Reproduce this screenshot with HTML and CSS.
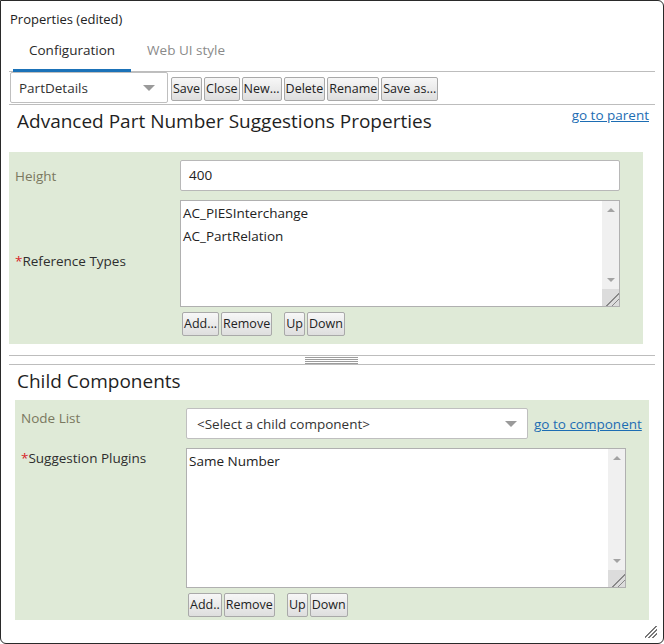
FILE: index.html
```html
<!DOCTYPE html>
<html>
<head>
<meta charset="utf-8">
<link rel="stylesheet" href="styles.css">
</head>
<body>
<div class="window">
  <div class="wtitle">Properties (edited)</div>
  <div class="tabs">
    <div class="tab active">Configuration</div>
    <div class="tab">Web UI style</div>
  </div>
  <div class="toolbar">
    <div class="select sel-part"><span>PartDetails</span><span class="arrow"></span></div>
    <button class="btn">Save</button>
    <button class="btn">Close</button>
    <button class="btn">New...</button>
    <button class="btn">Delete</button>
    <button class="btn">Rename</button>
    <button class="btn">Save as...</button>
  </div>

  <div class="sec-head">
    <h2 class="h2">Advanced Part Number Suggestions Properties</h2>
    <a class="link parent-link" href="#">go to parent</a>
  </div>
  <div class="panel panel1">
    <div class="lbl lbl-plain lbl-height">Height</div>
    <div class="field"><div class="input">400</div></div>
    <div class="lbl lbl-req lbl-ref"><span class="star">*</span>Reference Types</div>
    <div class="field">
      <div class="listbox lb1">
        <div class="items">
          <div class="item">AC_PIESInterchange</div>
          <div class="item">AC_PartRelation</div>
        </div>
        <div class="sbar"><span class="up"></span><span class="sb-fill"></span><span class="down"></span><span class="corner"></span></div>
      </div>
      <div class="btnrow">
        <button class="btn">Add...</button>
        <button class="btn">Remove</button>
        <button class="btn sp">Up</button>
        <button class="btn">Down</button>
      </div>
    </div>
  </div>

  <div class="splitter"><div class="grip"></div></div>

  <div class="sec-head sec-head2">
    <h2 class="h2">Child Components</h2>
  </div>
  <div class="panel panel2">
    <div class="lbl lbl-plain lbl-node">Node List</div>
    <div class="field row">
      <div class="select sel-child"><span>&lt;Select a child component&gt;</span><span class="arrow"></span></div>
      <a class="link comp-link" href="#">go to component</a>
    </div>
    <div class="lbl lbl-req lbl-plug"><span class="star">*</span>Suggestion Plugins</div>
    <div class="field">
      <div class="listbox lb2">
        <div class="items">
          <div class="item">Same Number</div>
        </div>
        <div class="sbar"><span class="up"></span><span class="sb-fill"></span><span class="down"></span><span class="corner"></span></div>
      </div>
      <div class="btnrow">
        <button class="btn">Add..</button>
        <button class="btn">Remove</button>
        <button class="btn sp">Up</button>
        <button class="btn">Down</button>
      </div>
    </div>
  </div>
  <div class="resize"></div>
</div>
</body>
</html>
```

FILE: styles.css
```css
* { box-sizing: border-box; }
html, body { margin: 0; padding: 0; background: #fff; }
body { font-family: "Open Sans", "Noto Sans", sans-serif; color: #222; }

.window {
  position: relative;
  width: 664px;
  height: 644px;
  border: 1px solid #2a2a2a;
  border-radius: 0 6px 6px 6px;
  padding: 0 8px 0 8px;
  overflow: hidden;
}

.wtitle {
  font-size: 13px;
  line-height: 20px;
  height: 29px;
  padding-top: 8px;
  padding-left: 1px;
  color: #222;
}

.tabs {
  display: flex;
  height: 42px;
  border-bottom: 1px solid #bdbdbd;
  padding-left: 4px;
}
.tab {
  height: 42px;
  margin-bottom: -1px;
  padding: 0 16px 0 16px;
  display: flex;
  align-items: center;
  font-size: 13.5px;
  color: #8a8a8a;
  border-bottom: 3px solid transparent;
}
.tab.active {
  color: #2a2a2a;
  border-bottom-color: #1b72b8;
}

.toolbar {
  display: flex;
  align-items: center;
  gap: 2px;
  height: 33px;
  border-bottom: 1px solid #bdbdbd;
  padding-left: 1px;
}

.select {
  display: flex;
  align-items: center;
  justify-content: space-between;
  border: 1px solid #bfbfbf;
  border-radius: 2px;
  background: #fff;
  font-size: 13.5px;
  color: #333;
}
.sel-part {
  width: 158px;
  height: 31px;
  padding: 0 12px 0 8px;
  margin-right: 1px;
  align-self: flex-start;
}
.arrow {
  width: 0; height: 0;
  border-left: 6px solid transparent;
  border-right: 6px solid transparent;
  border-top: 6px solid #9a9a9a;
}

.btn {
  font-family: "Open Sans", "Noto Sans", sans-serif;
  font-size: 12.5px;
  color: #222;
  height: 24px;
  padding: 0 1px;
  border: 1px solid #a9a9a9;
  border-radius: 2px;
  background: linear-gradient(#f7f7f7, #dedede);
  line-height: 20px;
  margin: 0;
}
.toolbar .btn { margin-top: 1px; }

.sec-head {
  display: flex;
  justify-content: space-between;
  align-items: flex-start;
  height: 47px;
  padding: 0 6px 0 8px;
}
.h2 {
  margin: 2px 0 0 0;
  font-weight: normal;
  font-size: 19px;
  line-height: 28px;
  color: #1f1f1f;
}
.link {
  color: #1d6db3;
  text-decoration: underline;
  font-size: 13.5px;
  line-height: 20px;
  white-space: nowrap;
}

.panel {
  width: 634px;
  background: #dfead7;
  display: grid;
  grid-template-columns: 165px 1fr;
  row-gap: 9px;
  padding: 8px 0 8px 6px;
}
.panel2 { margin-left: 6px; padding-bottom: 3px; }

.lbl { font-size: 13.5px; line-height: 20px; }
.lbl-plain { color: #7a7860; }
.lbl-req { color: #2e2e2e; }
.star { color: #d8242a; }
.lbl-height { padding-top: 6px; }
.lbl-ref { padding-top: 51px; }
.lbl-node { padding-top: 0px; }
.lbl-plug { padding-top: 0px; }

.input {
  width: 440px;
  height: 31px;
  border: 1px solid #b8b8b8;
  border-radius: 2px;
  background: #fff;
  font-size: 13.5px;
  line-height: 29px;
  padding-left: 8px;
  color: #222;
}

.listbox {
  display: flex;
  width: 440px;
  border: 1px solid #b0b0b0;
  background: #fff;
}
.lb1 { height: 107px; }
.lb2 { height: 140px; }
.items { flex: 1; padding: 1px 0 0 2px; }
.item { font-size: 13.5px; line-height: 23px; color: #222; }

.sbar {
  width: 17px;
  background: #f0f0f0;
  display: flex;
  flex-direction: column;
  align-items: center;
}
.sb-fill { flex: 1; }
.up, .down {
  width: 0; height: 0;
  border-left: 4px solid transparent;
  border-right: 4px solid transparent;
}
.up { border-bottom: 4px solid #a3a3a3; margin-top: 7px; }
.down { border-top: 4px solid #a3a3a3; margin-bottom: 7px; }
.corner {
  width: 17px;
  height: 17px;
  background:
    linear-gradient(135deg, transparent 0 60%, #888 60% 65%, transparent 65% 77%, #888 77% 82%, transparent 82%),
    #dcdcdc;
}

.btnrow {
  display: flex;
  gap: 2px;
  margin-top: 5px;
  padding-left: 2px;
}
.btnrow .sp { margin-left: 10px; }

.row { display: flex; align-items: center; gap: 6px; }
.sel-child {
  width: 342px;
  height: 31px;
  padding: 0 10px 0 10px;
}

.splitter {
  margin-top: 11px;
  height: 10px;
  border-top: 1px solid #bdbdbd;
  border-bottom: 1px solid #bdbdbd;
  display: flex;
  justify-content: center;
  padding-top: 1px;
}
.grip {
  width: 53px;
  height: 7px;
  margin-left: -1px;
  background: repeating-linear-gradient(#9c9c9c 0 1px, transparent 1px 2px);
}

.sec-head2 { height: 35px; }

.resize {
  position: absolute;
  right: 6px;
  bottom: 5px;
  width: 12px;
  height: 12px;
  background: linear-gradient(135deg, transparent 0 45%, #777 45% 52%, transparent 52% 62%, #777 62% 69%, transparent 69% 79%, #777 79% 86%, transparent 86%);
}
```
